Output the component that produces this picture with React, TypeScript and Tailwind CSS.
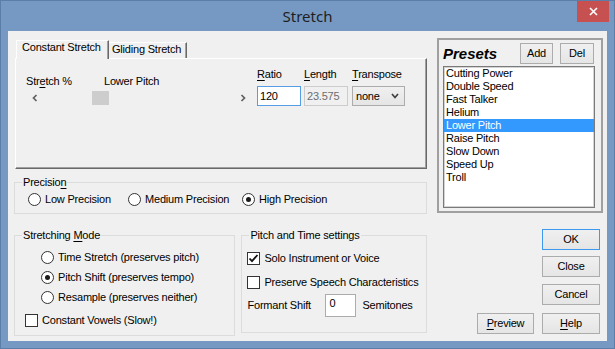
import type { ReactNode } from "react";

const presets = [
  "Cutting Power",
  "Double Speed",
  "Fast Talker",
  "Helium",
  "Lower Pitch",
  "Raise Pitch",
  "Slow Down",
  "Speed Up",
  "Troll",
];

function Radio({ checked = false, children }: { checked?: boolean; children: ReactNode }) {
  return (
    <div className="flex items-center gap-[4px] h-[13px]">
      <span className="w-[13px] h-[13px] rounded-full border border-[#333] bg-white flex items-center justify-center shrink-0">
        {checked && <span className="w-[5px] h-[5px] rounded-full bg-[#1a1a1a]" />}
      </span>
      <span>{children}</span>
    </div>
  );
}

function Check({ checked = false, children }: { checked?: boolean; children: ReactNode }) {
  return (
    <div className="flex items-center gap-[4px] h-[13px]">
      <span className="w-[13px] h-[13px] border border-[#333] bg-white flex items-center justify-center shrink-0">
        {checked && (
          <svg width="11" height="11" viewBox="0 0 11 11">
            <path d="M1.5 5.5 L4 8.2 L9.5 2" fill="none" stroke="#111" strokeWidth="1.8" />
          </svg>
        )}
      </span>
      <span>{children}</span>
    </div>
  );
}

function Btn({ children, def = false, className = "" }: { children: ReactNode; def?: boolean; className?: string }) {
  return (
    <div
      className={`h-[21px] flex items-center justify-center border bg-linear-to-b from-[#f0f0f0] to-[#e5e5e5] ${
        def ? "border-[#3c99f0]" : "border-[#acacac]"
      } ${className}`}
    >
      {children}
    </div>
  );
}

function Chevron({ right = false }: { right?: boolean }) {
  return (
    <svg width="6" height="8" viewBox="0 0 6 8">
      <path
        d={right ? "M1.5 1 L4.5 4 L1.5 7" : "M4.5 1 L1.5 4 L4.5 7"}
        fill="none"
        stroke="#606060"
        strokeWidth="1.7"
      />
    </svg>
  );
}

export default function App() {
  return (
    <div className="w-[615px] h-[349px] bg-[#7699c3] border border-[#5b7ea8] flex flex-col font-['Liberation_Sans',Arial,sans-serif] text-[11px] leading-[13px] tracking-[-0.2px] text-black">
      {/* title bar */}
      <div className="h-[30px] relative flex items-center justify-center">
        <span className="font-['Noto_Sans',sans-serif] text-[15px] tracking-normal text-[#1e1e1e]">Stretch</span>
        <div className="absolute top-0 right-[5px] w-[32px] h-[21px] bg-[#c75050] flex items-center justify-center">
          <svg width="9" height="9" viewBox="0 0 9 9">
            <path d="M1 1 L8 8 M8 1 L1 8" stroke="white" strokeWidth="1.6" />
          </svg>
        </div>
      </div>

      {/* client area */}
      <div className="mx-[7px] h-[310px] bg-[#f0f0f0] flex items-start pl-[6px]">
        {/* left column */}
        <div className="w-[413px] mt-[9px] flex flex-col">
          {/* tabs */}
          <div className="flex items-end h-[18px] pl-[2px]">
            <div className="relative z-10 h-[19px] -mb-[1px] w-[93px] bg-[#f0f0f0] border-t border-l border-t-white border-l-white border-r border-r-[#696969] shadow-[inset_-1px_0_0_#a0a0a0] pl-[5px]">
              Constant Stretch
            </div>
            <div className="h-[16px] w-[78px] border-t border-t-white border-r border-r-[#696969] shadow-[inset_-1px_0_0_#a0a0a0] pl-[3px]">
              Gliding Stretch
            </div>
          </div>

          {/* tab panel */}
          <div className="ml-[1px] h-[111px] border-t border-l border-t-white border-l-white border-r border-b border-r-[#696969] border-b-[#696969] shadow-[inset_-1px_-1px_0_#a0a0a0] flex">
            <div className="w-[241px] pl-[10px] pt-[16px]">
              <div className="flex h-[13px]">
                <span className="w-[78px]">
                  Str<span className="underline underline-offset-[2px]">e</span>tch %
                </span>
                <span>Lower Pitch</span>
              </div>
              <div className="mt-[3px] h-[14px] w-[225px] flex">
                <div className="w-[17px] flex items-center justify-center">
                  <Chevron />
                </div>
                <div className="flex-1">
                  <div className="ml-[49px] w-[17px] h-[14px] bg-[#cdcdcd]" />
                </div>
                <div className="w-[17px] flex items-center justify-center">
                  <Chevron right />
                </div>
              </div>
            </div>

            <div className="flex pt-[9px]">
              <div className="w-[44px] flex flex-col">
                <span>
                  <span className="underline underline-offset-[2px]">R</span>atio
                </span>
                <div className="mt-[5px] h-[20px] border border-[#569de5] bg-white pl-[2px] flex items-center">120</div>
              </div>
              <div className="w-[44px] ml-[3px] flex flex-col">
                <span>
                  <span className="underline underline-offset-[2px]">L</span>ength
                </span>
                <div className="mt-[5px] h-[20px] border border-[#cccccc] bg-[#f0f0f0] text-[#6d6d6d] pl-[2px] flex items-center">
                  23.575
                </div>
              </div>
              <div className="w-[53px] ml-[4px] flex flex-col">
                <span>
                  <span className="underline underline-offset-[2px]">T</span>ranspose
                </span>
                <div className="mt-[5px] h-[20px] border border-[#acacac] bg-linear-to-b from-[#f0f0f0] to-[#e5e5e5] pl-[3px] pr-[5px] flex items-center justify-between">
                  <span>none</span>
                  <svg width="8" height="6" viewBox="0 0 8 6">
                    <path d="M1 1 L4 4.5 L7 1" fill="none" stroke="#404040" strokeWidth="1.7" />
                  </svg>
                </div>
              </div>
            </div>
          </div>

          {/* precision */}
          <fieldset className="mt-[7px] h-[38px] border border-[#dcdcdc]">
            <legend className="ml-[7px] px-[1px]">
              Precisio<span className="underline underline-offset-[2px]">n</span>
            </legend>
            <div className="mt-[4px] pl-[13px] flex">
              <div className="w-[100px]">
                <Radio>Low Precision</Radio>
              </div>
              <div className="w-[114px]">
                <Radio>Medium Precision</Radio>
              </div>
              <Radio checked>High Precision</Radio>
            </div>
          </fieldset>

          {/* bottom groups */}
          <div className="mt-[15px] flex items-start">
            <fieldset className="w-[222px] h-[107px] border border-[#dcdcdc]">
              <legend className="ml-[7px] px-[1px]">
                Stretching <span className="underline underline-offset-[2px]">M</span>ode
              </legend>
              <div className="pt-[5px] pl-[26px]">
                <div className="h-[20px] flex items-center">
                  <Radio>Time Stretch (preserves pitch)</Radio>
                </div>
                <div className="h-[20px] flex items-center">
                  <Radio checked>Pitch Shift (preserves tempo)</Radio>
                </div>
                <div className="h-[20px] flex items-center">
                  <Radio>Resample (preserves neither)</Radio>
                </div>
              </div>
              <div className="mt-[7px] pl-[10px]">
                <Check>Constant Vowels (Slow!)</Check>
              </div>
            </fieldset>

            <fieldset className="ml-[6px] w-[186px] h-[104px] border border-[#dcdcdc]">
              <legend className="ml-[7px] px-[1px]">Pitch and Time settings</legend>
              <div className="pl-[5px]">
                <div className="mt-[10px]">
                  <Check checked>Solo Instrument or Voice</Check>
                </div>
                <div className="mt-[11px]">
                  <Check>Preserve Speech Characteristics</Check>
                </div>
                <div className="mt-[5px] flex items-center">
                  <span className="w-[78px]">Formant Shift</span>
                  <div className="w-[31px] h-[23px] border border-[#acacac] bg-white pl-[3px] pt-[2px]">0</div>
                  <span className="ml-[6px]">Semitones</span>
                </div>
              </div>
            </fieldset>
          </div>
        </div>

        {/* right column */}
        <div className="ml-[10px] w-[166px] mt-[7px] flex flex-col">
          <div className="h-[175px] border-2 border-[#a0a0a0]">
            <div className="mt-[4px] h-[18px] flex items-center pl-[4px]">
              <span className="font-bold italic text-[15px] leading-[17px] tracking-normal">Presets</span>
              <div className="flex-1" />
              <Btn className="w-[33px] h-[17px]">Add</Btn>
              <Btn className="w-[34px] h-[17px] ml-[7px] mr-[7px]">Del</Btn>
            </div>
            <div className="mt-[4px] ml-[4px] w-[152px] h-[142px] border border-[#7a7a7a] shadow-[inset_0_0_0_1px_#d4d4d4] bg-white">
              {presets.map((p) => (
                <div
                  key={p}
                  className={`h-[13px] pl-[2px] ${p === "Lower Pitch" ? "bg-[#3399ff] text-white" : ""}`}
                >
                  {p}
                </div>
              ))}
            </div>
          </div>

          <div className="mt-[16px] pr-[3px] flex flex-col items-end">
            <Btn def className="w-[58px]">OK</Btn>
            <Btn className="w-[58px] mt-[6px]">Close</Btn>
            <Btn className="w-[58px] mt-[7px]">Cancel</Btn>
            <div className="mt-[8px] flex">
              <Btn className="w-[57px]">
                <span>
                  <span className="underline underline-offset-[2px]">P</span>review
                </span>
              </Btn>
              <Btn className="w-[58px] ml-[8px]">
                <span>
                  <span className="underline underline-offset-[2px]">H</span>elp
                </span>
              </Btn>
            </div>
          </div>
        </div>
      </div>
    </div>
  );
}
